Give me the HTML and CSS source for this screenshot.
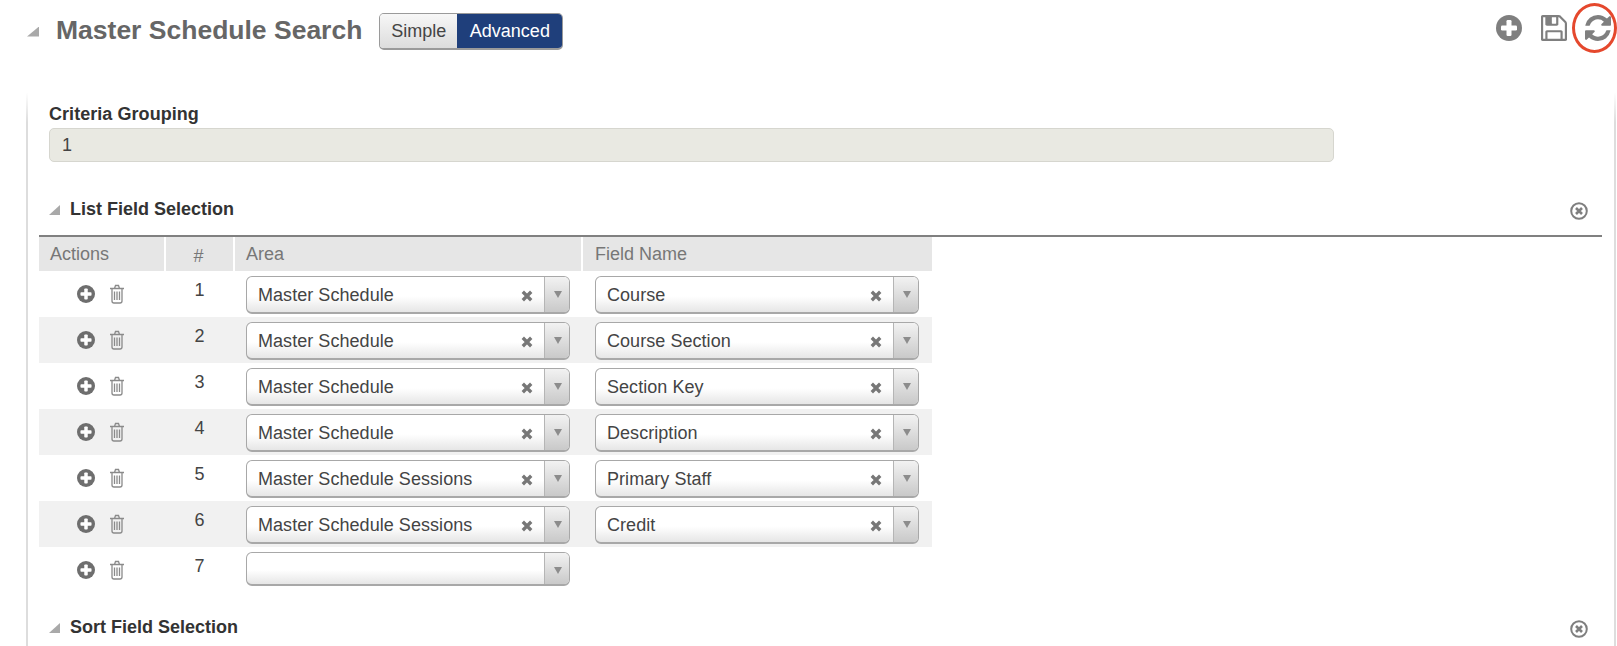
FILE: index.html

```html
<!DOCTYPE html>
<html lang="en">
<head>
  <meta charset="UTF-8" />
  <title>Master Schedule Search</title>
  <link rel="stylesheet" href="styles.css">
</head>
<body>
  <svg class="defs" width="0" height="0">
    <symbol id="i-plus" viewBox="0 0 26 26">
      <circle cx="13" cy="13" r="13" fill="currentColor"/>
      <rect x="10.500" y="5" width="5" height="16" rx="1.200" fill="#fff"/>
      <rect x="5" y="10.500" width="16" height="5" rx="1.200" fill="#fff"/>
    </symbol>
    <symbol id="i-trash" viewBox="0 0 16 20">
      <g fill="none" stroke="currentColor" stroke-width="1.300">
        <path d="M1 4.500h14M3 4.500v12.500q0 2 2 2h6q2 0 2-2V4.500M5.500 4.500l1-3h3l1 3"/>
        <path d="M5.500 7.500v8.500M8 7.500v8.500M10.500 7.500v8.500"/>
      </g>
    </symbol>
    <symbol id="i-save" viewBox="128 128 1536 1536">
      <path fill="currentColor" d="M512 1536h768v-384h-768v384zm896 0h128v-896q0-14-10-38.500t-20-34.500l-281-281q-10-10-34-20t-39-10v416q0 40-28 68t-68 28h-576q-40 0-68-28t-28-68v-416h-128v1280h128v-416q0-40 28-68t68-28h832q40 0 68 28t28 68v416zm-384-928v-320q0-13-9.500-22.500t-22.500-9.500h-192q-13 0-22.500 9.500t-9.500 22.500v320q0 13 9.500 22.500t22.500 9.500h192q13 0 22.500-9.500t9.500-22.500zm640 32v928q0 40-28 68t-68 28h-1344q-40 0-68-28t-28-68v-1344q0-40 28-68t68-28h928q40 0 88 20t76 48l280 280q28 28 48 76t20 88z"/>
    </symbol>
    <symbol id="i-refresh" viewBox="128 128 1536 1536">
      <path fill="currentColor" d="M1639 1056q0 5-1 7-64 268-268 434.500t-478 166.500q-146 0-282.500-55t-243.500-157l-129 129q-19 19-45 19t-45-19-19-45v-448q0-26 19-45t45-19h448q26 0 45 19t19 45-19 45l-137 137q71 66 161 102t187 36q134 0 250-65t186-179q11-17 53-117 8-23 30-23h192q13 0 22.500 9.500t9.500 22.500zm25-800v448q0 26-19 45t-45 19h-448q-26 0-45-19t-19-45 19-45l138-138q-148-137-349-137-134 0-250 65t-186 179q-11 17-53 117-8 23-30 23h-199q-13 0-22.500-9.500t-9.500-22.500v-7q65-268 270-434.500t480-166.500q146 0 284 55.500t245 156.500l130-129q19-19 45-19t45 19 19 45z"/>
    </symbol>
    <symbol id="i-close" viewBox="0 0 18 18">
      <circle cx="9" cy="9" r="7.800" fill="none" stroke="currentColor" stroke-width="2"/>
      <path d="M6 6l6 6M12 6l-6 6" fill="none" stroke="currentColor" stroke-width="2.600"/>
    </symbol>
    <symbol id="i-x" viewBox="0 0 10 10">
      <path d="M1.500 1.500l7 7M8.500 1.500l-7 7" fill="none" stroke="currentColor" stroke-width="2.800"/>
    </symbol>
  </svg>

  <div class="page-head">
    <span class="tri tri-big"></span>
    <h1>Master Schedule Search</h1>
    <div class="toggle">
      <span class="toggle-btn">Simple</span>
      <span class="toggle-btn active">Advanced</span>
    </div>
    <div class="head-icons">
      <svg class="head-icon"><use href="#i-plus"/></svg>
      <svg class="head-icon"><use href="#i-save"/></svg>
      <svg class="head-icon"><use href="#i-refresh"/></svg>
    </div>
    <span class="red-ring"></span>
  </div>

  <div class="panel">
    <div class="criteria">
      <label>Criteria Grouping</label>
      <div class="readonly">1</div>
    </div>

    <div class="section-head">
      <span class="tri"></span>
      <h2>List Field Selection</h2>
      <svg class="close"><use href="#i-close"/></svg>
    </div>

    <div class="grid">
      <div class="row head">
        <div>Actions</div>
        <div class="num">#</div>
        <div>Area</div>
        <div>Field Name</div>
      </div>

      <div class="row">
        <div class="actions"><svg class="plus"><use href="#i-plus"/></svg><svg class="trash"><use href="#i-trash"/></svg></div>
        <div class="num">1</div>
        <div class="cell"><div class="select"><span class="value">Master Schedule</span><svg class="clear"><use href="#i-x"/></svg><span class="arrow"></span></div></div>
        <div class="cell"><div class="select"><span class="value">Course</span><svg class="clear"><use href="#i-x"/></svg><span class="arrow"></span></div></div>
      </div>
      <div class="row alt">
        <div class="actions"><svg class="plus"><use href="#i-plus"/></svg><svg class="trash"><use href="#i-trash"/></svg></div>
        <div class="num">2</div>
        <div class="cell"><div class="select"><span class="value">Master Schedule</span><svg class="clear"><use href="#i-x"/></svg><span class="arrow"></span></div></div>
        <div class="cell"><div class="select"><span class="value">Course Section</span><svg class="clear"><use href="#i-x"/></svg><span class="arrow"></span></div></div>
      </div>
      <div class="row">
        <div class="actions"><svg class="plus"><use href="#i-plus"/></svg><svg class="trash"><use href="#i-trash"/></svg></div>
        <div class="num">3</div>
        <div class="cell"><div class="select"><span class="value">Master Schedule</span><svg class="clear"><use href="#i-x"/></svg><span class="arrow"></span></div></div>
        <div class="cell"><div class="select"><span class="value">Section Key</span><svg class="clear"><use href="#i-x"/></svg><span class="arrow"></span></div></div>
      </div>
      <div class="row alt">
        <div class="actions"><svg class="plus"><use href="#i-plus"/></svg><svg class="trash"><use href="#i-trash"/></svg></div>
        <div class="num">4</div>
        <div class="cell"><div class="select"><span class="value">Master Schedule</span><svg class="clear"><use href="#i-x"/></svg><span class="arrow"></span></div></div>
        <div class="cell"><div class="select"><span class="value">Description</span><svg class="clear"><use href="#i-x"/></svg><span class="arrow"></span></div></div>
      </div>
      <div class="row">
        <div class="actions"><svg class="plus"><use href="#i-plus"/></svg><svg class="trash"><use href="#i-trash"/></svg></div>
        <div class="num">5</div>
        <div class="cell"><div class="select"><span class="value">Master Schedule Sessions</span><svg class="clear"><use href="#i-x"/></svg><span class="arrow"></span></div></div>
        <div class="cell"><div class="select"><span class="value">Primary Staff</span><svg class="clear"><use href="#i-x"/></svg><span class="arrow"></span></div></div>
      </div>
      <div class="row alt">
        <div class="actions"><svg class="plus"><use href="#i-plus"/></svg><svg class="trash"><use href="#i-trash"/></svg></div>
        <div class="num">6</div>
        <div class="cell"><div class="select"><span class="value">Master Schedule Sessions</span><svg class="clear"><use href="#i-x"/></svg><span class="arrow"></span></div></div>
        <div class="cell"><div class="select"><span class="value">Credit</span><svg class="clear"><use href="#i-x"/></svg><span class="arrow"></span></div></div>
      </div>
      <div class="row">
        <div class="actions"><svg class="plus"><use href="#i-plus"/></svg><svg class="trash"><use href="#i-trash"/></svg></div>
        <div class="num">7</div>
        <div class="cell"><div class="select empty"><span class="value"></span><span class="arrow"></span></div></div>
        <div></div>
      </div>
    </div>

    <div class="section-head sort">
      <span class="tri"></span>
      <h2>Sort Field Selection</h2>
      <svg class="close"><use href="#i-close"/></svg>
    </div>
  </div>
</body>
</html>
```

FILE: styles.css

```css
html, body {
  height: 646px;
  overflow: hidden;
}
body {
  margin: 0;
  background: #fff;
  font-family: "Liberation Sans", Arial, sans-serif;
  font-size: 18px;
  color: #444;
}
.defs {
  position: absolute;
}

.tri {
  flex: none;
  width: 11px;
  height: 10px;
  background: #a9a9a9;
  clip-path: polygon(100% 0, 100% 100%, 0 100%);
}
.tri-big {
  width: 12px;
  margin-right: 17px;
}

.page-head {
  position: relative;
  display: flex;
  align-items: center;
  height: 63px;
  padding: 0 6px 0 27px;
}
h1 {
  margin: 0 17px 3px 0;
  font-size: 26.500px;
  font-weight: bold;
  color: #666;
}
.toggle {
  display: flex;
  width: 184px;
  height: 37px;
  border: 1px solid #9a9a9a;
  border-bottom-width: 2px;
  border-radius: 5px;
  box-sizing: border-box;
  overflow: hidden;
}
.toggle-btn {
  width: 77px;
  line-height: 34px;
  text-align: center;
  color: #444;
  background: linear-gradient(#f7f7f7, #dcdcdc);
}
.toggle-btn.active {
  flex: 1;
  color: #fff;
  background: #1f3f7b;
}
.head-icons {
  display: flex;
  gap: 18.500px;
  margin-left: auto;
  margin-bottom: 7px;
}
.head-icon {
  width: 26px;
  height: 26px;
  color: #7f7f7f;
}
.red-ring {
  position: absolute;
  left: 1572px;
  top: 3px;
  width: 45px;
  height: 50px;
  box-sizing: border-box;
  border: 3.500px solid #e5482d;
  border-radius: 50%;
}

.panel {
  margin: 30px 0 0 26px;
  width: 1590px;
  box-sizing: border-box;
  padding: 11px 12px 0 11px;
  height: 560px;
  border-left: 2px solid #ddd;
  border-right: 2px solid #ddd;
  border-image: linear-gradient(#fff, #ddd 30px) 1;
}

.criteria {
  padding-left: 10px;
}
.criteria label {
  display: block;
  margin-bottom: 4px;
  line-height: 20px;
  font-weight: bold;
  color: #333;
  letter-spacing: 0.050px;
}
.readonly {
  width: 1285px;
  height: 34px;
  box-sizing: border-box;
  padding-left: 12px;
  line-height: 32px;
  background: #e9e9e2;
  border: 1px solid #d6d6cf;
  border-radius: 5px;
}

.section-head {
  display: flex;
  align-items: center;
  gap: 10px;
  margin-top: 35px;
  height: 24px;
  padding: 0 14px 14px 10px;
  border-bottom: 2px solid #808080;
}
.section-head.sort {
  margin-top: 22px;
  border-bottom: none;
}
h2 {
  margin: 0;
  font-size: 18px;
  font-weight: bold;
  color: #333;
}
.section-head h2 {
  margin-top: 1px;
}
.section-head .tri {
  margin-top: 2px;
}
.close {
  width: 18px;
  height: 18px;
  margin-left: auto;
  margin-top: 4px;
  color: #7f7f7f;
}

.grid {
  width: 893px;
}
.row {
  display: grid;
  grid-template-columns: 127px 69px 348px 349px;
  height: 46px;
}
.row.alt {
  background: #f1f1f1;
}
.row.head {
  height: 34px;
  line-height: 34px;
  color: #777;
}
.row.head > div {
  padding-left: 11px;
  background: #e6e6e6;
  border-right: 2px solid #fff;
}
.row.head > div:last-child {
  padding-left: 12px;
  border-right: none;
}
.row.head > .num {
  padding-left: 0;
  text-align: center;
}
.row > .num {
  padding: 9px 2px 0 0;
  line-height: 20px;
  text-align: center;
}
.actions {
  display: flex;
  align-items: center;
  padding: 0 0 0 38px;
  gap: 14px;
}
.plus {
  width: 18px;
  height: 18px;
  color: #6e6e6e;
}
.trash {
  width: 16px;
  height: 20px;
  color: #8a8a8a;
}
.cell {
  padding: 5px 0 0 11px;
}
.cell:last-child {
  padding-left: 12px;
}
.select {
  display: flex;
  align-items: center;
  width: 324px;
  height: 38px;
  box-sizing: border-box;
  border: 1px solid #a8a8a8;
  border-bottom-width: 2px;
  border-radius: 6px;
  background: linear-gradient(#fff 55%, #e6e6e6);
  overflow: hidden;
}
.select.empty {
  height: 34px;
}
.value {
  flex: 1;
  padding: 2px 0 0 11px;
  color: #444;
  letter-spacing: 0.050px;
}
.clear {
  width: 12px;
  height: 12px;
  margin: 2px 11px 0 0;
  color: #777;
}
.arrow {
  position: relative;
  align-self: stretch;
  width: 24px;
  border-left: 1px solid #b5b5b5;
  background: linear-gradient(#f2f2f2, #c9c9c9);
}
.arrow::after {
  content: "";
  position: absolute;
  left: 9px;
  top: 14px;
  border: 4px solid transparent;
  border-top: 7px solid #8c8c8c;
  border-bottom: none;
}
```
